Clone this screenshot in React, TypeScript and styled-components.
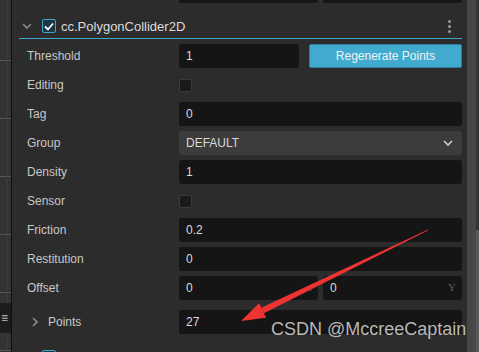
import React from 'react';
import styled, {createGlobalStyle} from 'styled-components';

const GlobalStyle = createGlobalStyle`
  html, body {
    margin: 0;
    padding: 0;
    width: 479px;
    height: 352px;
    overflow: hidden;
    background: #2c2c2c;
    font-family: "Liberation Sans", Arial, sans-serif;
  }
`

type Field =
    | {kind: 'input', label: string, value: string}
    | {kind: 'check', label: string}
    | {kind: 'select', label: string, value: string}

const fields: Field[] = [
    {kind: 'check', label: 'Editing'},
    {kind: 'input', label: 'Tag', value: '0'},
    {kind: 'select', label: 'Group', value: 'DEFAULT'},
    {kind: 'input', label: 'Density', value: '1'},
    {kind: 'check', label: 'Sensor'},
    {kind: 'input', label: 'Friction', value: '0.2'},
    {kind: 'input', label: 'Restitution', value: '0'},
]

const ChevronDown = ({color = '#8a8a8a'}: {color?: string}) => (
    <svg width="10" height="6" viewBox="0 0 10 6">
        <path d="M1 1 L5 5 L9 1" fill="none" stroke={color} strokeWidth="1.6"/>
    </svg>
)

const ChevronRight = () => (
    <svg width="6" height="10" viewBox="0 0 6 10">
        <path d="M1 1 L5 5 L1 9" fill="none" stroke="#8a8a8a" strokeWidth="1.6"/>
    </svg>
)

export default function App() {
    return (
        <>
            <GlobalStyle/>
            <Screen>
                <SceneStrip>
                    <StripSpacer/>
                    <ToolBlock>≡</ToolBlock>
                </SceneStrip>
                <Panel>
                    <PrevTail>
                        <TailBox/>
                        <TailBox/>
                    </PrevTail>

                    <Header>
                        <Fold><ChevronDown/></Fold>
                        <CheckBox checked>
                            <svg width="10" height="9" viewBox="0 0 10 9">
                                <path d="M1 4.5 L4 7.5 L9 1.5" fill="none" stroke="#ffffff" strokeWidth="1.8"/>
                            </svg>
                        </CheckBox>
                        <Title>cc.PolygonCollider2D</Title>
                        <MenuDots><i/><i/><i/></MenuDots>
                    </Header>

                    <Rows>
                        <Row>
                            <Label>Threshold</Label>
                            <SplitValue>
                                <Input>1</Input>
                                <Button>Regenerate Points</Button>
                            </SplitValue>
                        </Row>
                        {fields.map(f => (
                            <Row key={f.label}>
                                <Label>{f.label}</Label>
                                {f.kind === 'input' && <Input>{f.value}</Input>}
                                {f.kind === 'check' && <Cell><CheckBox/></Cell>}
                                {f.kind === 'select' && (
                                    <Select>
                                        {f.value}
                                        <ChevronDown color="#cfcfcf"/>
                                    </Select>
                                )}
                            </Row>
                        ))}
                        <Row>
                            <Label>Offset</Label>
                            <VecValue>
                                <Input>0<Axis>x</Axis></Input>
                                <Input>0<Axis>Y</Axis></Input>
                            </VecValue>
                        </Row>
                        <Row spaced>
                            <Label indent><ChevronRight/>Points</Label>
                            <Input>27</Input>
                        </Row>
                    </Rows>

                    <Header plain>
                        <Fold><ChevronDown/></Fold>
                        <CheckBox checked/>
                    </Header>
                </Panel>
                <Scrollbar>
                    <Track/>
                    <Edge/>
                </Scrollbar>

                <Arrow width="479" height="352" viewBox="0 0 479 352">
                    <polygon points="428.1,229.6 427.9,230.4 263.9,313.2 261.3,307.8" fill="#ee3333"/>
                    <polygon points="241,321 259.1,303.3 266.1,317.7" fill="#ee3333"/>
                </Arrow>
                <Watermark>CSDN @MccreeCaptain</Watermark>
            </Screen>
        </>
    );
}

const Screen = styled.div`
  position: relative;
  display: flex;
  width: 479px;
  height: 352px;
  overflow: hidden;
  background: #2c2c2c;
`
const SceneStrip = styled.div`
  flex: 0 0 11px;
  display: flex;
  flex-direction: column;
  border-right: 1px solid #101010;
  background:
    linear-gradient(to right, transparent 7px, #3c3c3c 7px, #3c3c3c 8px, transparent 8px),
    repeating-linear-gradient(to bottom, transparent 0 57px, #565656 57px 58px) 0 3px,
    #333333;
`
const StripSpacer = styled.div`
  flex: 0 0 303px;
`
const ToolBlock = styled.div`
  flex: 0 0 30px;
  background: #1c1c1c;
  color: #bdbdbd;
  font-size: 12px;
  line-height: 30px;
  padding-left: 1px;
  overflow: hidden;
`
const Panel = styled.div`
  flex: 1;
  display: flex;
  flex-direction: column;
  padding-right: 5px;

  & > * {
    flex-shrink: 0;
  }
`
const PrevTail = styled.div`
  height: 3px;
  display: grid;
  grid-template-columns: 1fr 1fr;
  gap: 5px;
  margin-left: 167px;
`
const TailBox = styled.div`
  background: #151515;
  border-radius: 0 0 3px 3px;
`
const Header = styled.div<{plain?: boolean}>`
  display: flex;
  align-items: center;
  height: 24px;
  margin-top: ${p => p.plain ? 11 : 11}px;
  margin-left: 7px;
  border-bottom: ${p => p.plain ? 'none' : '1px solid #3ca6cf'};
`
const Fold = styled.span`
  display: flex;
  width: 20px;
  padding-left: 3px;
`
const CheckBox = styled.span<{checked?: boolean}>`
  box-sizing: border-box;
  display: inline-flex;
  align-items: center;
  justify-content: center;
  width: ${p => p.checked ? 14 : 13}px;
  height: ${p => p.checked ? 14 : 13}px;
  border-radius: 2px;
  border: 1px solid ${p => p.checked ? '#3ca6cf' : '#3b3b3b'};
  background: ${p => p.checked ? '#1b3542' : '#1a1a1a'};
`
const Title = styled.span`
  margin-left: 5px;
  flex: 1;
  color: #dcdcdc;
  font-size: 13px;
`
const MenuDots = styled.span`
  display: flex;
  flex-direction: column;
  gap: 2px;
  margin-right: 11px;
  i {
    display: block;
    width: 3px;
    height: 3px;
    border-radius: 50%;
    background: #9a9a9a;
  }
`
const Rows = styled.div`
  display: flex;
  flex-direction: column;
  gap: 5px;
  padding-top: 5px;

  & > * {
    flex-shrink: 0;
  }
`
const Row = styled.div<{spaced?: boolean}>`
  display: grid;
  grid-template-columns: 152px 1fr;
  align-items: center;
  height: 24px;
  padding-left: 15px;
  margin-top: ${p => p.spaced ? 5 : 0}px;
`
const Label = styled.div<{indent?: boolean}>`
  display: flex;
  align-items: center;
  gap: 10px;
  padding-left: ${p => p.indent ? 5 : 0}px;
  color: #c8c8c8;
  font-size: 12px;
`
const Cell = styled.div`
  display: flex;
  align-items: center;
`
const Input = styled.div`
  position: relative;
  display: flex;
  align-items: center;
  height: 24px;
  padding-left: 7px;
  border-radius: 3px;
  background: #151515;
  color: #dadada;
  font-size: 12px;
`
const Axis = styled.span`
  position: absolute;
  right: 6px;
  top: 5px;
  color: #5e5e5e;
  font-family: "Liberation Serif", "DejaVu Serif", serif;
  font-size: 11px;
`
const SplitValue = styled.div`
  display: grid;
  grid-template-columns: 120px 1fr;
  gap: 10px;
`
const VecValue = styled.div`
  display: grid;
  grid-template-columns: 1fr 1fr;
  gap: 5px;
`
const Button = styled.div`
  box-sizing: border-box;
  display: flex;
  align-items: center;
  justify-content: center;
  height: 24px;
  border: 1px solid #2f7f9c;
  border-radius: 2px;
  background: #40abcf;
  color: #f2f2f2;
  font-size: 12px;
`
const Select = styled.div`
  display: flex;
  align-items: center;
  justify-content: space-between;
  height: 24px;
  padding: 0 9px 0 7px;
  border-radius: 3px;
  background: #3c3c3c;
  color: #d8d8d8;
  font-size: 12px;
`
const Scrollbar = styled.div`
  flex: 0 0 12px;
  display: flex;
`
const Track = styled.div`
  flex: 0 0 9px;
  background: #474747;
`
const Edge = styled.div`
  flex: 1;
  background: linear-gradient(to bottom, #333333 0 230px, #595959 230px);
`
const Arrow = styled.svg`
  position: absolute;
  left: 0;
  top: 0;
  pointer-events: none;
`
const Watermark = styled.div`
  position: absolute;
  left: 271px;
  top: 319px;
  color: rgba(215, 215, 215, 0.85);
  font-size: 18px;
  white-space: nowrap;
`
